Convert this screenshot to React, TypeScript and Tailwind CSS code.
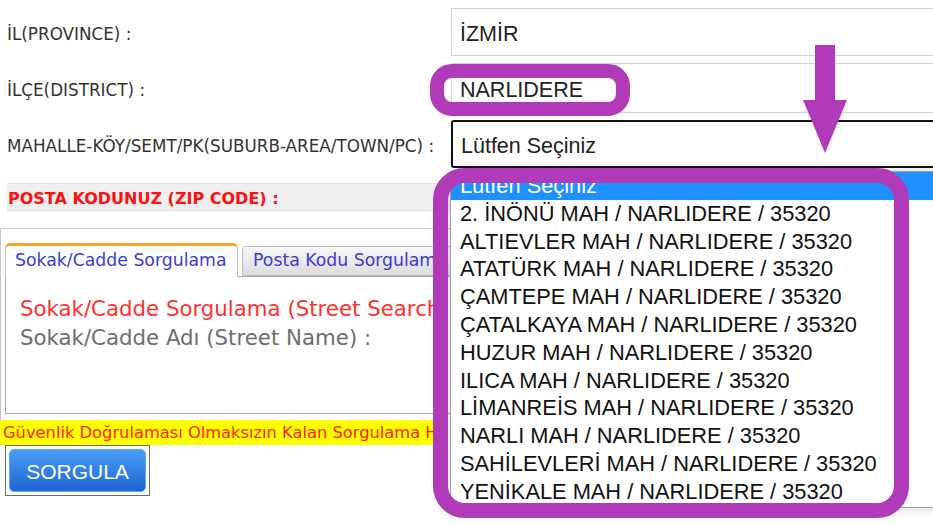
const items = [
  "2. İNÖNÜ MAH / NARLIDERE / 35320",
  "ALTIEVLER MAH / NARLIDERE / 35320",
  "ATATÜRK MAH / NARLIDERE / 35320",
  "ÇAMTEPE MAH / NARLIDERE / 35320",
  "ÇATALKAYA MAH / NARLIDERE / 35320",
  "HUZUR MAH / NARLIDERE / 35320",
  "ILICA MAH / NARLIDERE / 35320",
  "LİMANREİS MAH / NARLIDERE / 35320",
  "NARLI MAH / NARLIDERE / 35320",
  "SAHİLEVLERİ MAH / NARLIDERE / 35320",
  "YENİKALE MAH / NARLIDERE / 35320",
];

const label = "w-[451px] flex-none pl-[7px] pt-[6px] text-[16.8px] text-[#333] font-['DejaVu_Sans',sans-serif] whitespace-nowrap";
const field = "w-[600px] flex-none flex items-center pl-[8px] pt-[5px] text-[21.5px] text-[#222] font-['Liberation_Sans',Arial,sans-serif]";

export default function App() {
  return (
    <div className="relative w-[933px] h-[525px] overflow-hidden bg-white">
      <div className="flex flex-col pt-[8px]">
        <div className="flex items-center">
          <div className={label}>İL(PROVINCE) :</div>
          <div className={`${field} h-[48px] border border-[#d4d4d4]`}>İZMİR</div>
        </div>
        <div className="flex items-center mt-[7px]">
          <div className={label}>İLÇE(DISTRICT) :</div>
          <div className={`${field} h-[50px] border border-[#d4d4d4]`}>NARLIDERE</div>
        </div>
        <div className="flex items-center mt-[7px]">
          <div className={label}>MAHALLE-KÖY/SEMT/PK(SUBURB-AREA/TOWN/PC) :</div>
          <div className={`${field} h-[48px] border-2 border-[#111] rounded-[3px] pl-[7px]`}>Lütfen Seçiniz</div>
        </div>

        <div className="mt-[15px] ml-[7px] w-[470px] h-[28px] flex items-center pl-[1px] pt-[3px] bg-[#efefef] border-y border-[#e2e2e2]">
          <span className="text-[16px] font-bold text-[#ff1010] font-['DejaVu_Sans',sans-serif] whitespace-nowrap">
            POSTA KODUNUZ (ZIP CODE) :
          </span>
        </div>

        <div className="mt-[17px] border-t border-l border-[#c8c8c8] pt-[14px] pl-[4px] pb-[6px]">
          <div className="flex items-end font-['DejaVu_Sans',sans-serif] text-[17.3px] text-[#3b3bd6]">
            <div className="w-[233px] h-[34px] flex items-center pl-[9px] bg-white border border-[#bdbdbd] border-t-[3px] border-t-[#f5a623] border-b-white rounded-t-[5px] -mb-px relative z-10 whitespace-nowrap">
              Sokak/Cadde Sorgulama
            </div>
            <div className="ml-[4px] w-[240px] h-[30px] flex items-center pl-[10px] bg-gradient-to-b from-[#f7f7f7] to-[#dcdcdc] border border-[#bdbdbd] rounded-t-[4px] whitespace-nowrap overflow-hidden">
              Posta Kodu Sorgulama
            </div>
          </div>
          <div className="w-[470px] h-[138px] border border-[#a8a8a8] pt-[17px] pl-[14px] font-['DejaVu_Sans',sans-serif] text-[21.3px] leading-[29px] whitespace-nowrap overflow-hidden">
            <div className="text-[#ff3030]">Sokak/Cadde Sorgulama (Street Search)</div>
            <div className="text-[#6e6e6e]">Sokak/Cadde Adı (Street Name) :</div>
          </div>
        </div>

        <div className="w-[445px] h-[25px] flex items-center pl-[3px] pt-[2px] bg-[#ffff00] overflow-hidden">
          <span className="text-[16.3px] text-[#ff2200] font-['DejaVu_Sans',sans-serif] whitespace-nowrap">
            Güvenlik Doğrulaması Olmaksızın Kalan Sorgulama H
          </span>
        </div>

        <div className="ml-[5px] w-[145px] h-[51px] border-[1.5px] border-[#6b6b6b] p-[3px]">
          <button className="w-full h-full pt-[2px] rounded-[5px] border border-[#5aa8ff] bg-gradient-to-b from-[#4b9cf5] to-[#1c66d6] text-white text-[21px] font-['Liberation_Sans',Arial,sans-serif]">
            SORGULA
          </button>
        </div>
      </div>

      {/* open select list */}
      <div className="absolute left-[450px] top-[171px] w-[520px] h-[337px] border border-[#a0a0a0] bg-white shadow-[0_0_10px_rgba(0,0,0,0.18)] font-['Liberation_Sans',Arial,sans-serif] text-[21.8px] leading-[27.8px] text-[#111]">
        <div className="pl-[9px] bg-[#1e90ff] text-white">Lütfen Seçiniz</div>
        {items.map((item) => (
          <div key={item} className="pl-[9px] whitespace-nowrap">
            {item}
          </div>
        ))}
      </div>

      {/* annotations */}
      <div className="absolute left-[430px] top-[64px] w-[200px] h-[52px] border-[14px] border-[#b03ab8] rounded-[22px]" />
      <div className="absolute left-[433px] top-[168px] w-[476px] h-[350px] border-[15px] border-[#b03ab8] rounded-[32px]" />
      <svg className="absolute left-[800px] top-[40px]" width="50" height="116" viewBox="0 0 50 116">
        <rect x="15" y="5" width="20" height="56" fill="#b03ab8" />
        <polygon points="3,60 47,60 25,113" fill="#b03ab8" />
      </svg>
    </div>
  );
}
